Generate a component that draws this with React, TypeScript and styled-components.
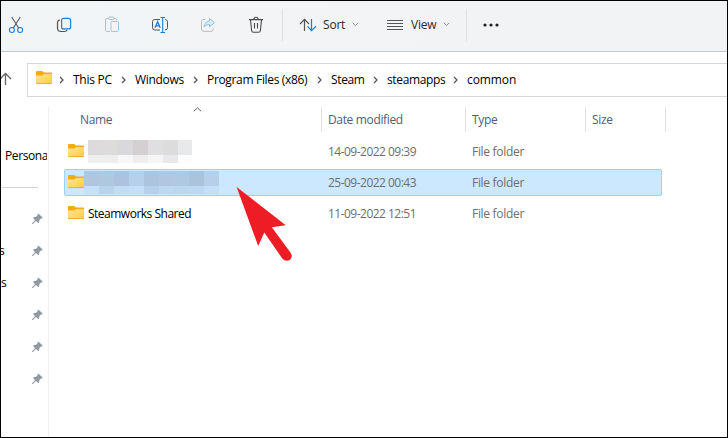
import { Fragment } from "react";
import styled, { createGlobalStyle } from "styled-components";

const GlobalStyle = createGlobalStyle`
    * {
        box-sizing: border-box;
    }
    body {
        margin: 0;
        font-family: "Open Sans", "Noto Sans", sans-serif;
        font-size: 12px;
        color: #111;
    }
    svg {
        display: block;
        flex: none;
    }
`;

const Window = styled.div`
    position: relative;
    width: 728px;
    height: 438px;
    border: 1px solid #000;
    background: #fff;
    overflow: hidden;
    display: flex;
    flex-direction: column;
`;

const Toolbar = styled.div`
    height: 51px;
    flex: none;
    display: flex;
    align-items: center;
    background: linear-gradient(100deg, #f1f5f6 0%, #f2f4f6 30%, #f2f3f5 60%);
    border-bottom: 1px solid #c5c6c8;
    padding-left: 7px;
`;

const ToolButton = styled.div<{ $width: number; $indent?: number }>`
    width: ${(p) => p.$width}px;
    height: 32px;
    display: flex;
    align-items: center;
    padding-left: ${(p) => p.$indent || 0}px;
    padding-bottom: 3px;
`;

const ToolDivider = styled.div`
    width: 1px;
    height: 32px;
    margin-bottom: 3px;
    background: #dfe0e2;
`;

const ToolLabel = styled.span<{ $width: number; $gap: number }>`
    width: ${(p) => p.$width}px;
    margin-left: ${(p) => p.$gap}px;
    padding-top: 1px;
    line-height: 16px;
    letter-spacing: -0.2px;
    color: #2b2b2b;
    white-space: nowrap;
`;

const AddressBar = styled.div`
    height: 54px;
    flex: none;
    display: flex;
    align-items: center;
    padding-top: 1px;
`;

const UpButton = styled.div`
    width: 26px;
    height: 16px;
`;

const AddressBox = styled.div`
    flex: 1;
    height: 34px;
    display: flex;
    align-items: center;
    border: 1px solid #d6d6d6;
    border-right: none;
    padding-left: 8px;
`;

const AddressIcon = styled.div`
    width: 23px;
    padding-bottom: 3px;
`;

const Crumb = styled.div<{ $width: number; $spacing: number }>`
    width: ${(p) => p.$width}px;
    letter-spacing: ${(p) => p.$spacing}px;
    line-height: 16px;
    color: #000;
    white-space: nowrap;
`;

const CrumbChevron = styled.div`
    width: 14px;
`;

const Body = styled.div`
    flex: 1;
    display: flex;
`;

const Sidebar = styled.div`
    width: 48px;
    display: flex;
    flex-direction: column;
    padding-top: 33px;
    border-right: 1px solid #f1f1f1;
    margin-top: 1px;
`;

const AccountLabel = styled.div`
    width: 46px;
    height: 32px;
    padding-left: 4px;
    line-height: 32px;
    letter-spacing: -0.4px;
    color: #000;
    white-space: nowrap;
    overflow: hidden;
`;

const SidebarRule = styled.div`
    width: 37px;
    height: 1px;
    margin: 15px 0;
    background: #d4d4d4;
`;

const PinnedItem = styled.div`
    height: 32px;
    display: flex;
    align-items: center;
    justify-content: space-between;
    padding-right: 5px;
    color: #000;
`;

const PinnedName = styled.span<{ $shift: number }>`
    width: 8px;
    margin-left: ${(p) => p.$shift}px;
    line-height: 16px;
`;

const FileList = styled.div`
    flex: 1;
    padding: 1px 0 0 15px;
`;

const HeaderRow = styled.div`
    height: 25px;
    display: flex;
`;

const HeaderCell = styled.div<{ $width: number; $indent: number }>`
    width: ${(p) => p.$width}px;
    padding-left: ${(p) => p.$indent}px;
    border-right: 1px solid #e2e2e2;
    letter-spacing: -0.35px;
    line-height: 25px;
    color: #4c607a;
    white-space: nowrap;
`;

const SortMark = styled.div`
    position: absolute;
    left: 192px;
    top: 106px;
`;

const Rows = styled.div`
    padding-top: 6px;
    display: flex;
    flex-direction: column;
    gap: 4px;
`;

const FileRow = styled.div<{ $selected?: boolean }>`
    width: 598px;
    height: 27px;
    display: flex;
    align-items: center;
    border: 1px solid ${(p) => (p.$selected ? "#99d1ff" : "transparent")};
    border-radius: 2px;
    background: ${(p) => (p.$selected ? "#cce8ff" : "transparent")};
    padding-left: 3px;
`;

const NameCell = styled.div`
    width: 260px;
    display: flex;
    align-items: center;
    color: #000;
`;

const RowIcon = styled.div`
    padding-bottom: 2px;
`;

const FileName = styled.span`
    margin-left: 4px;
    letter-spacing: -0.5px;
    line-height: 16px;
`;

const DateCell = styled.div`
    width: 144px;
    letter-spacing: -0.52px;
    line-height: 16px;
    color: #6d6d6d;
`;

const TypeCell = styled.div`
    letter-spacing: -0.3px;
    line-height: 16px;
    color: #6d6d6d;
`;

const Mosaic = styled.div<{ $indent: number; $columns: number; $last: number }>`
    margin-left: ${(p) => p.$indent}px;
    display: grid;
    grid-template-columns: repeat(${(p) => p.$columns - 1}, 15px) ${(p) => p.$last}px;
    grid-template-rows: 15px 8px;
`;

const MosaicTile = styled.div<{ $color: string }>`
    background: ${(p) => p.$color};
`;

const Pointer = styled.svg`
    position: absolute;
    left: 235px;
    top: 185px;
`;

const FolderIcon = () => (
    <svg width="16" height="14" viewBox="0 0 16 14">
        <defs>
            <linearGradient id="folder" x1="0" y1="0" x2="1" y2="1">
                <stop offset="0" stopColor="#ffe69a" />
                <stop offset="1" stopColor="#ffcb3f" />
            </linearGradient>
        </defs>
        <path d="M0 1Q0 0 1 0H6.3L8 1.6H15Q16 1.6 16 2.6V6H0Z" fill="#f2ad0c" />
        <path d="M0 4.6H6.5L8.2 3H15Q16 3 16 4V12Q16 13 15 13H1Q0 13 0 12Z" fill="url(#folder)" />
        <path d="M.3 12.6H15.7" stroke="#e2a62c" strokeWidth=".8" />
    </svg>
);

const CutIcon = () => (
    <svg width="16" height="18" viewBox="0 0 16 18" fill="none" strokeWidth="1.1">
        <path d="M3.7 1L10.8 12.2M12.3 1L5.2 12.2" stroke="#555" />
        <circle cx="3.9" cy="14" r="2.5" stroke="#1a7fd1" />
        <circle cx="12.1" cy="14" r="2.5" stroke="#1a7fd1" />
    </svg>
);

const CopyIcon = () => (
    <svg width="16" height="16" viewBox="0 0 16 16" fill="none" strokeWidth="1.2">
        <path d="M4 3Q1.5 3.4 1.5 5.5V11Q1.5 14.5 5 14.5H8.5Q10.6 14.5 11 12.8" stroke="#555" />
        <rect x="5.6" y="1.3" width="9" height="10.6" rx="2" stroke="#1a7fd1" />
    </svg>
);

const PasteIcon = () => (
    <svg width="16" height="17" viewBox="0 0 16 17" fill="none">
        <path d="M6 15.4H3Q1.5 15.4 1.5 14V3.9Q1.5 2.5 3 2.5H4.5M10 2.5H11.3Q12.7 2.5 12.7 3.9V4.5" stroke="#b9bcbe" />
        <rect x="4.6" y="1" width="5.4" height="2.6" rx="1.2" stroke="#b9bcbe" />
        <rect x="7" y="5.5" width="7.5" height="10" rx="1.2" stroke="#9cc8e8" />
    </svg>
);

const RenameIcon = () => (
    <svg width="18" height="18" viewBox="0 0 18 18" fill="none">
        <path d="M9 3.5H3.8Q1.5 3.5 1.5 5.8V11.7Q1.5 14 3.8 14H9M14 3.5Q16.5 3.6 16.5 5.8V11.7Q16.5 13.9 14 14" stroke="#555" />
        <path d="M4 11.8L6.6 5.7L9.2 11.8M5 9.8H8.2" stroke="#1a7fd1" strokeWidth="1.3" />
        <path d="M9.5 1.5H14M11.7 1.5V16.5M9.5 16.5H14" stroke="#1a7fd1" strokeWidth="1.1" />
    </svg>
);

const ShareIcon = () => (
    <svg width="16" height="16" viewBox="0 0 16 16" fill="none" strokeLinejoin="round">
        <path d="M5.5 2.5H3.5Q1.5 2.5 1.5 4.5V12.3Q1.5 14.3 3.5 14.3H11.2Q13.2 14.3 13.2 12.3V11" stroke="#b9bcbe" />
        <path d="M9.5 1.3L14.5 5.7L9.5 10V7.5Q6 7.2 4 10Q4.6 4.5 9.5 4Z" stroke="#8fc0e8" fill="#dbeaf6" />
    </svg>
);

const DeleteIcon = () => (
    <svg width="16" height="18" viewBox="0 0 16 18" fill="none" stroke="#4a4a4a" strokeWidth="1.1">
        <path d="M1 3.6H15M5.8 3.4Q5.9 1.3 8 1.3T10.2 3.4M2.5 3.8L3.6 14.5Q3.8 16.3 5.4 16.3H10.6Q12.2 16.3 12.4 14.5L13.5 3.8M6.5 7V12.5M9.5 7V12.5" />
    </svg>
);

const SortIcon = () => (
    <svg width="18" height="14" viewBox="0 0 18 14" fill="none" strokeWidth="1.2">
        <path d="M5.5 13V1.5M1 6L5.5 1.3L10 6" stroke="#555" />
        <path d="M12.5 1V12.5M8.5 8.3L12.5 12.6L17 8.3" stroke="#1a7fd1" />
    </svg>
);

const ViewIcon = () => (
    <svg width="16" height="12" viewBox="0 0 16 12" stroke="#555">
        <path d="M0 1.5H16M0 4.5H16M0 7.5H16M0 10.5H16" />
    </svg>
);

const DownIcon = () => (
    <svg width="7" height="5" viewBox="0 0 7 5" fill="none" stroke="#8a8a8a">
        <path d="M.7 .8L3.5 3.6L6.3 .8" />
    </svg>
);

const MoreIcon = () => (
    <svg width="16" height="4" viewBox="0 0 16 4" fill="#222">
        <circle cx="2" cy="2" r="1.6" />
        <circle cx="8" cy="2" r="1.6" />
        <circle cx="14" cy="2" r="1.6" />
    </svg>
);

const ChevronIcon = () => (
    <svg width="5" height="8" viewBox="0 0 5 8" fill="none" stroke="#555" strokeWidth="1.3">
        <path d="M1 1L4 4L1 7" />
    </svg>
);

const PinIcon = () => (
    <svg width="11" height="12" viewBox="0 0 11 12">
        <path d="M6.2 .4L10.7 4.6L9.8 5.5L8.9 5.4L7.3 7.2L7.2 9.3L6.2 10L3.9 7.9L.9 10.9L.1 11L.3 10.1L3.1 7.1L1 5L1.8 4L3.9 4.1L5.6 2.3L5.4 1.2Z" fill="#8f9ba3" />
    </svg>
);

const crumbs = [
    { name: "This PC", width: 48, spacing: -0.25 },
    { name: "Windows", width: 58, spacing: -0.3 },
    { name: "Program Files (x86)", width: 110, spacing: -0.33 },
    { name: "Steam", width: 42, spacing: -0.35 },
    { name: "steamapps", width: 66, spacing: -0.35 },
    { name: "common", width: 60, spacing: -0.1 },
];

const pinned = [
    { name: "", shift: 0 },
    { name: "s", shift: -2 },
    { name: "s", shift: 0 },
    { name: "", shift: 0 },
    { name: "", shift: 0 },
    { name: "", shift: 0 },
];

const greyTiles = [
    "#dcdadb", "#dddcda", "#d9d8dd", "#d4d0d2", "#dfdee0", "#dcdcdd", "#e8e9eb",
    "#efeeef", "#eeeeee", "#f7f7f8", "#efeeef", "#f6f6f6", "#e8e9eb", "#fcfcfc",
];

const blueTiles = [
    "#b0c6df", "#aec8df", "#acc2de", "#b5d0e8", "#adc4df", "#b1c7df", "#aec9e1", "#acc3dc", "#b7cfe8",
    "#c5e0f9", "#b7d4ec", "#c2dcf4", "#c4dff5", "#b6cfea", "#bdd8f0", "#bad7ee", "#bdd8f1", "#c2dff6",
];

const App = () => {
    return (
        <Window>
            <GlobalStyle />
            <Toolbar>
                <ToolButton $width={48}><CutIcon /></ToolButton>
                <ToolButton $width={48}><CopyIcon /></ToolButton>
                <ToolButton $width={47}><PasteIcon /></ToolButton>
                <ToolButton $width={49}><RenameIcon /></ToolButton>
                <ToolButton $width={48}><ShareIcon /></ToolButton>
                <ToolButton $width={34}><DeleteIcon /></ToolButton>
                <ToolDivider />
                <ToolButton $width={104} $indent={16}>
                    <SortIcon />
                    <ToolLabel $width={29} $gap={6}>Sort</ToolLabel>
                    <DownIcon />
                </ToolButton>
                <ToolButton $width={79}>
                    <ViewIcon />
                    <ToolLabel $width={32} $gap={8}>View</ToolLabel>
                    <DownIcon />
                </ToolButton>
                <ToolDivider />
                <ToolButton $width={48} $indent={16}>
                    <MoreIcon />
                </ToolButton>
            </Toolbar>
            <AddressBar>
                <UpButton>
                    <svg width="12" height="14" viewBox="0 0 12 14" fill="none" stroke="#666" strokeWidth="1.3">
                        <path d="M4.5 13V2M-1 7L4.5 1.5L10 7" />
                    </svg>
                </UpButton>
                <AddressBox>
                    <AddressIcon><FolderIcon /></AddressIcon>
                    {crumbs.map((crumb) => (
                        <Fragment key={crumb.name}>
                            <CrumbChevron><ChevronIcon /></CrumbChevron>
                            <Crumb $width={crumb.width} $spacing={crumb.spacing}>{crumb.name}</Crumb>
                        </Fragment>
                    ))}
                </AddressBox>
            </AddressBar>
            <Body>
                <Sidebar>
                    <AccountLabel>Persona</AccountLabel>
                    <SidebarRule />
                    {pinned.map((item, index) => (
                        <PinnedItem key={index}>
                            <PinnedName $shift={item.shift}>{item.name}</PinnedName>
                            <PinIcon />
                        </PinnedItem>
                    ))}
                </Sidebar>
                <FileList>
                    <HeaderRow>
                        <HeaderCell $width={258} $indent={16}>Name</HeaderCell>
                        <HeaderCell $width={144} $indent={6}>Date modified</HeaderCell>
                        <HeaderCell $width={120} $indent={6}>Type</HeaderCell>
                        <HeaderCell $width={80} $indent={6}>Size</HeaderCell>
                    </HeaderRow>
                    <Rows>
                        <FileRow>
                            <NameCell>
                                <RowIcon><FolderIcon /></RowIcon>
                                <Mosaic $indent={4} $columns={7} $last={14}>
                                    {greyTiles.map((color, index) => <MosaicTile key={index} $color={color} />)}
                                </Mosaic>
                            </NameCell>
                            <DateCell>14-09-2022 09:39</DateCell>
                            <TypeCell>File folder</TypeCell>
                        </FileRow>
                        <FileRow $selected>
                            <NameCell>
                                <RowIcon><FolderIcon /></RowIcon>
                                <Mosaic $indent={0} $columns={9} $last={15}>
                                    {blueTiles.map((color, index) => <MosaicTile key={index} $color={color} />)}
                                </Mosaic>
                            </NameCell>
                            <DateCell>25-09-2022 00:43</DateCell>
                            <TypeCell>File folder</TypeCell>
                        </FileRow>
                        <FileRow>
                            <NameCell>
                                <RowIcon><FolderIcon /></RowIcon>
                                <FileName>Steamworks Shared</FileName>
                            </NameCell>
                            <DateCell>11-09-2022 12:51</DateCell>
                            <TypeCell>File folder</TypeCell>
                        </FileRow>
                    </Rows>
                </FileList>
            </Body>
            <SortMark>
                <svg width="9" height="5" viewBox="0 0 9 5" fill="none" stroke="#666">
                    <path d="M.8 4.3L4.5 .8L8.2 4.3" />
                </svg>
            </SortMark>
            <Pointer width="60" height="80" viewBox="0 0 60 80">
                <path d="M.6 1L49.8 39.2L35.8 41.2L55 67.2Q57 71.5 53.8 74Q49.5 76 46.5 72.8L28.3 46.5L22.2 60Z" fill="#ee1c25" />
            </Pointer>
        </Window>
    );
}

export default App;
